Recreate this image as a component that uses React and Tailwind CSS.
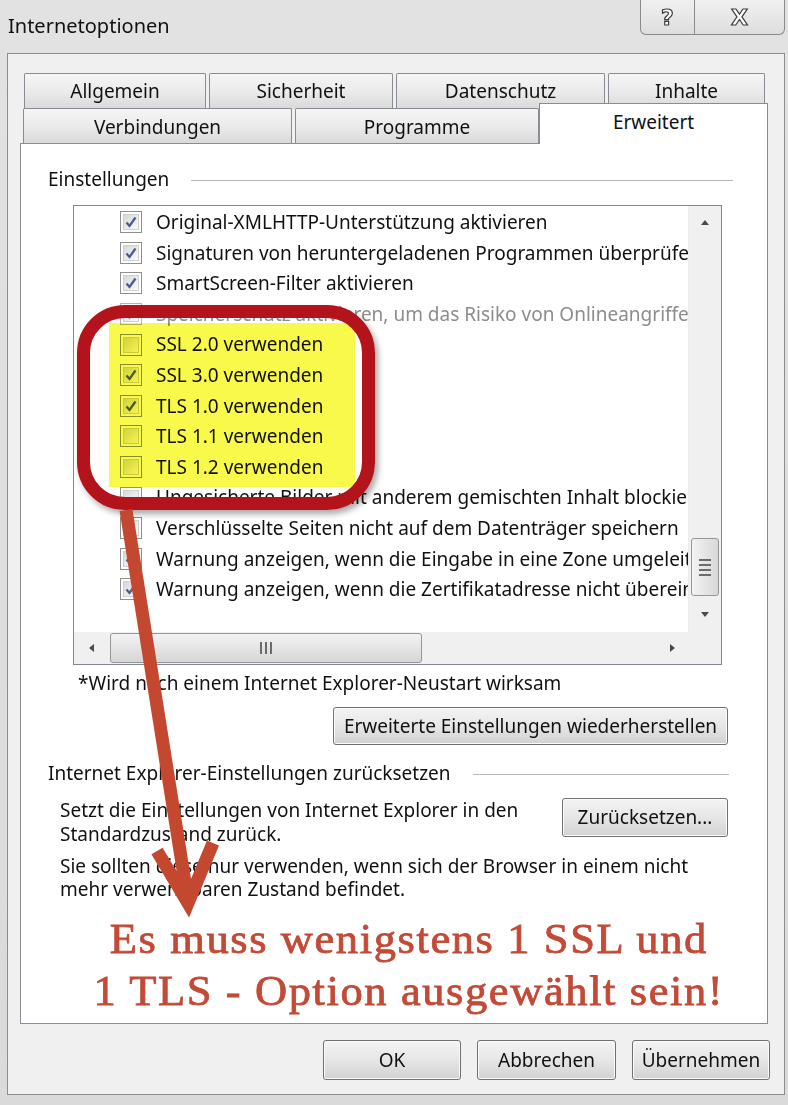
import React from "react";

const rows = [
  { t: "Original-XMLHTTP-Unterstützung aktivieren", c: true },
  { t: "Signaturen von heruntergeladenen Programmen überprüfen", c: true },
  { t: "SmartScreen-Filter aktivieren", c: true },
  { t: "Speicherschutz aktivieren, um das Risiko von Onlineangriffen zu verringern*", c: true, d: true },
  { t: "SSL 2.0 verwenden", c: false },
  { t: "SSL 3.0 verwenden", c: true },
  { t: "TLS 1.0 verwenden", c: true },
  { t: "TLS 1.1 verwenden", c: false },
  { t: "TLS 1.2 verwenden", c: false },
  { t: "Ungesicherte Bilder mit anderem gemischten Inhalt blockieren", c: false },
  { t: "Verschlüsselte Seiten nicht auf dem Datenträger speichern", c: false },
  { t: "Warnung anzeigen, wenn die Eingabe in eine Zone umgeleitet wird, die nicht", c: true },
  { t: "Warnung anzeigen, wenn die Zertifikatadresse nicht übereinstimmt*", c: true },
];

function Check({ checked, disabled }) {
  return (
    <div
      className={`w-[22px] h-[22px] border ${
        disabled ? "border-[#b5b5b5]" : "border-[#8e8f8f]"
      } bg-white p-[2px] shrink-0`}
    >
      <div className="w-full h-full border border-[#cfcfcf] bg-gradient-to-br from-[#d8d8d8] to-[#fbfbfb] flex items-center justify-center">
        {checked && (
          <svg width="14" height="14" viewBox="0 0 14 14">
            <path
              d="M2.5 7.5 L5.5 11 L11.5 2.5"
              fill="none"
              stroke={disabled ? "#9aa0ad" : "#4a5d92"}
              strokeWidth="2.3"
            />
          </svg>
        )}
      </div>
    </div>
  );
}

function Tri({ dir }) {
  const pts = {
    up: "1,8 5,3 9,8",
    down: "1,3 5,8 9,3",
    left: "7,1 2,5 7,9",
    right: "3,1 8,5 3,9",
  }[dir];
  return (
    <svg width="10" height="10" viewBox="0 0 10 10">
      <polygon points={pts} fill="#4a4a4a" />
    </svg>
  );
}

function Button({ children, className = "" }) {
  return (
    <div
      className={`border border-[#707070] rounded-[3px] bg-gradient-to-b from-[#f4f4f4] via-[#e6e6e6] to-[#d2d2d2] shadow-[inset_0_0_0_1px_#fbfbfb] flex items-center justify-center text-[19px] text-[#111] ${className}`}
    >
      {children}
    </div>
  );
}

function Tab({ children, className = "" }) {
  return (
    <div
      className={`border border-b-0 border-[#898c95] rounded-t-[2px] bg-gradient-to-b from-[#f5f5f5] via-[#ebebeb] to-[#d9d9d9] flex items-center justify-center text-[19px] text-[#111] ${className}`}
    >
      {children}
    </div>
  );
}

export default function App() {
  return (
    <div className="relative w-[788px] h-[1105px] overflow-hidden bg-gradient-to-b from-[#e2e2e2] to-[#dadada] font-['Noto_Sans','Open_Sans',sans-serif] text-[#111]">
      {/* title bar */}
      <div className="h-[53px] flex items-start justify-between">
        <div className="pl-[8px] pt-[12px] text-[20px] leading-[28px] text-[#111]">Internetoptionen</div>
        <div className="flex h-[35px] mr-[3px] border border-t-0 border-[#8a8a8a] rounded-b-[6px] bg-gradient-to-b from-[#f0f0f0] to-[#dedede] overflow-hidden">
          <div className="w-[54px] flex items-center justify-center border-r border-[#8a8a8a] text-[22px] font-bold text-white [-webkit-text-stroke:1.2px_#3c3c3c] font-['DejaVu_Sans',sans-serif]">
            ?
          </div>
          <div className="w-[89px] flex items-center justify-center text-[22px] font-bold text-white [-webkit-text-stroke:1.2px_#3c3c3c] font-['DejaVu_Sans',sans-serif]">
            X
          </div>
        </div>
      </div>

      {/* dialog */}
      <div className="ml-[7px] w-[778px] h-[1042px] border border-[#8d8d8d] bg-[#f0f0f0] pt-[19px] pl-[12px] flex flex-col">
        {/* tabs */}
        <div className="w-[748px] h-[70px] flex flex-col">
          <div className="flex h-[36px] ml-[4px] gap-[3px]">
            <Tab className="w-[182px]">Allgemein</Tab>
            <Tab className="w-[184px]">Sicherheit</Tab>
            <Tab className="w-[209px]">Datenschutz</Tab>
            <Tab className="w-[157px]">Inhalte</Tab>
          </div>
          <div className="flex h-[35px] -mt-[1px] ml-[3px] items-end">
            <Tab className="w-[269px] h-[35px] mr-[3px] pt-[2px]">Verbindungen</Tab>
            <Tab className="w-[244px] h-[35px] pt-[2px]">Programme</Tab>
            <div className="w-[229px] h-[41px] -mb-[1px] relative z-10 border border-b-0 border-[#898c95] bg-white flex justify-center pt-[5px] text-[19px] leading-[26px]">
              Erweitert
            </div>
          </div>
        </div>

        {/* panel */}
        <div className="w-[748px] h-[881px] border border-[#898c95] bg-white flex flex-col">
          <div className="flex items-center h-[22px] mt-[24px] pl-[27px] pr-[34px] text-[19px]">
            <span>Einstellungen</span>
            <div className="flex-1 ml-[22px] h-[1px] bg-[#b9b9b9] mt-[2px]" />
          </div>

          {/* listbox */}
          <div className="mt-[15px] ml-[52px] w-[649px] h-[460px] border border-[#828790] flex flex-col">
            <div className="flex h-[426px]">
              <div className="flex-1 overflow-hidden pt-[1px]">
                {rows.map((r, i) => (
                  <div key={i} className="flex items-center h-[30.6px] pl-[46px] whitespace-nowrap">
                    <Check checked={r.c} disabled={r.d} />
                    <span className={`ml-[14px] text-[19px] ${r.d ? "text-[#8c8c8c]" : "text-[#111]"}`}>{r.t}</span>
                  </div>
                ))}
              </div>
              {/* vertical scrollbar */}
              <div className="w-[33px] bg-[#f0f0f0] border-l border-[#ececec] flex flex-col">
                <div className="h-[32px] flex items-center justify-center">
                  <Tri dir="up" />
                </div>
                <div className="h-[300px]" />
                <div className="h-[58px] mx-[2px] border border-[#979797] rounded-[3px] bg-gradient-to-r from-[#f3f3f3] to-[#d8d8d8] flex flex-col items-center justify-center gap-[3px]">
                  <div className="w-[12px] h-[2px] bg-[#6b6b6b]" />
                  <div className="w-[12px] h-[2px] bg-[#6b6b6b]" />
                  <div className="w-[12px] h-[2px] bg-[#6b6b6b]" />
                  <div className="w-[12px] h-[2px] bg-[#6b6b6b]" />
                </div>
                <div className="flex-1 flex items-center justify-center">
                  <Tri dir="down" />
                </div>
              </div>
            </div>
            {/* horizontal scrollbar */}
            <div className="flex flex-1 bg-[#f0f0f0]">
              <div className="w-[36px] flex items-center justify-center">
                <Tri dir="left" />
              </div>
              <div className="w-[312px] my-[1px] border border-[#979797] rounded-[3px] bg-gradient-to-b from-[#f3f3f3] to-[#d6d6d6] flex items-center justify-center gap-[3px]">
                <div className="w-[2px] h-[12px] bg-[#6b6b6b]" />
                <div className="w-[2px] h-[12px] bg-[#6b6b6b]" />
                <div className="w-[2px] h-[12px] bg-[#6b6b6b]" />
              </div>
              <div className="flex-1" />
              <div className="w-[33px] flex items-center justify-center">
                <Tri dir="right" />
              </div>
              <div className="w-[33px] bg-[#f0f0f0]" />
            </div>
          </div>

          <div className="mt-[7px] ml-[57px] h-[22px] flex items-center text-[19px]">
            *Wird nach einem Internet Explorer-Neustart wirksam
          </div>

          <div className="mt-[13px] flex justify-end pr-[39px]">
            <Button className="w-[395px] h-[38px]">Erweiterte Einstellungen wiederherstellen</Button>
          </div>

          <div className="flex items-center h-[22px] mt-[17px] pl-[27px] pr-[38px] text-[19px]">
            <span>Internet Explorer-Einstellungen zurücksetzen</span>
            <div className="flex-1 ml-[22px] h-[1px] bg-[#b9b9b9] mt-[2px]" />
          </div>

          <div className="mt-[14px] flex pl-[39px] pr-[39px] justify-between">
            <div className="text-[19px] leading-[24px]">
              Setzt die Einstellungen von Internet Explorer in den
              <br />
              Standardzustand zurück.
            </div>
            <Button className="w-[166px] h-[39px]">Zurücksetzen...</Button>
          </div>

          <div className="mt-[9px] pl-[39px] text-[19px] leading-[23px]">
            Sie sollten diese nur verwenden, wenn sich der Browser in einem nicht
            <br />
            mehr verwendbaren Zustand befindet.
          </div>

          <div className="mt-[12px] pl-[28px] text-center font-['Liberation_Serif',serif] text-[42px] leading-[52px] tracking-[1.5px] scale-x-[1.06] text-[#c24a36] [-webkit-text-stroke:0.8px_#c24a36]">
            Es muss wenigstens 1 SSL und
            <br />1 TLS - Option ausgewählt sein!
          </div>
        </div>

        {/* bottom buttons */}
        <div className="mt-[16px] flex justify-end gap-[16px] pr-[14px]">
          <Button className="w-[138px] h-[40px]">OK</Button>
          <Button className="w-[139px] h-[40px]">Abbrechen</Button>
          <Button className="w-[138px] h-[40px]">Übernehmen</Button>
        </div>
      </div>

      {/* annotation: yellow highlight */}
      <div className="absolute left-[109px] top-[323px] w-[246px] h-[164px] bg-[#f9f94c] mix-blend-multiply" />

      {/* annotation: red rounded rectangle */}
      <div className="absolute left-[77px] top-[305px] w-[298px] h-[205px] border-[13px] border-[#b3141c] rounded-[48px] shadow-[3px_4px_6px_rgba(0,0,0,0.35)]" />

      {/* annotation: arrow */}
      <svg className="absolute left-0 top-0" width="788" height="1105" viewBox="0 0 788 1105">
        <g stroke="#c4482f" strokeWidth="13" fill="none" strokeLinecap="butt">
          <line x1="126" y1="510" x2="187" y2="895" />
          <polyline points="157,851 188,903 213,843" strokeLinejoin="miter" />
        </g>
      </svg>
    </div>
  );
}
